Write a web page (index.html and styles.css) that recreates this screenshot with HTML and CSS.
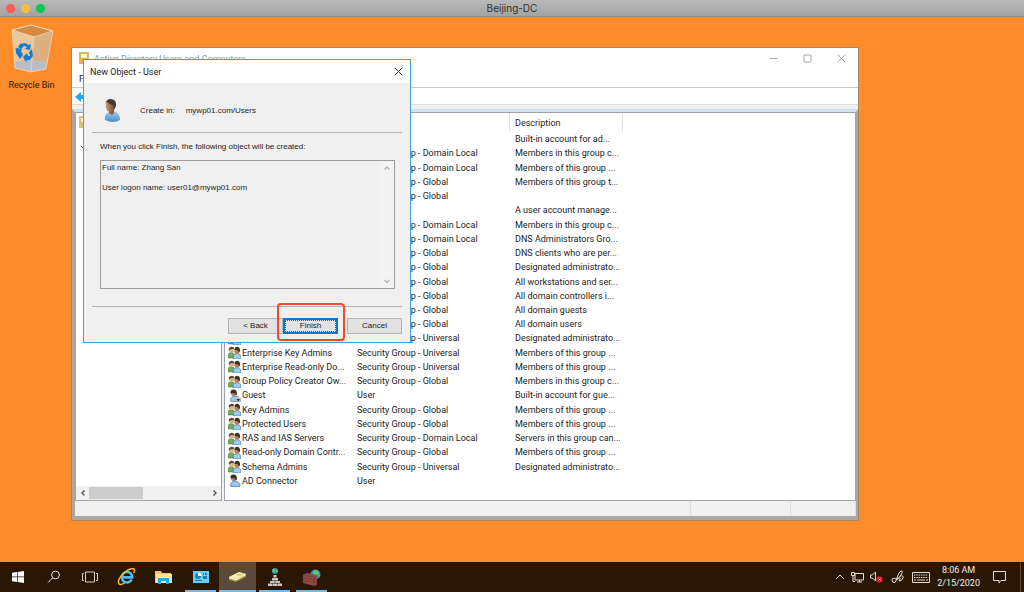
FILE: index.html
```html
<!DOCTYPE html>
<html lang="en">
<head>
<meta charset="utf-8">
<title>Beijing-DC</title>
<link rel="stylesheet" href="styles.css">
</head>
<body>
<svg class="symbols" aria-hidden="true">
  <symbol id="group" viewBox="0 0 12 12">
    <path d="M0 11V8q1-2 3-2t3 2v3z" fill="#72ad5c" stroke="#47703a" stroke-width=".5"/>
    <circle cx="3.400" cy="3.600" r="2.500" fill="#dcb87c"/><path d="M.8 4V2q2-2.500 5-.5L5 3Q3 2 1.600 4z" fill="#5c4a30"/>
    <path d="M4.800 12V9q1-2 3.500-2T12 9v3z" fill="#9bcdf4" stroke="#44719c" stroke-width=".6"/>
    <circle cx="8.300" cy="4.800" r="2.400" fill="#b98557"/><path d="M6 3.800q0-3 2.500-3T11.200 4.500L10 6Q10 3.200 6 3.800z" fill="#3a322c"/>
  </symbol>
  <symbol id="user" viewBox="0 0 12 12">
    <path d="M2.500 11.500V9q1-2.500 4-2.500T11 9v2.500z" fill="#9bcaf0" stroke="#46698c" stroke-width=".6"/>
    <circle cx="5.300" cy="3.800" r="2.700" fill="#b07c54"/><path d="M2.300 4Q2 .5 5 .5q3.500 0 3.200 4.500L7 6Q7.500 3 2.300 4z" fill="#38302a"/>
  </symbol>
</svg>
<header class="mac-bar">
  <div class="lights"><span class="light red"></span><span class="light yellow"></span><span class="light green"></span></div>
  <h1>Beijing-DC</h1>
</header>
<main class="desktop">
  <a class="shortcut" href="#bin">
    <svg viewBox="0 0 46 52" aria-hidden="true">
      <path d="M3 6 22 1l22 6-7 38-16 3-15-4z" fill="#e5bb8c"/>
      <path d="M3 6 22 1l22 6-19 6z" fill="#d58a42" stroke="#f5ddc0" stroke-width="1"/>
      <path d="M3 6l22 7-3 35-16-4z" fill="#edc69c"/>
      <path d="M25 13 44 7l-7 38-15 3z" fill="#dcb080"/>
      <path d="M5 39l12-4 21 3-1 7-15 3-16-4z" fill="#b9bec6"/>
      <path d="M3 6 6 44l16 4 15-3 7-38M25 13l-3 35" fill="none" stroke="#f3d9b8" stroke-width=".7"/>
      <g fill="#137ed0"><path d="M11 20l5-1 4 2 2-1-1 6-5-1 2-2-3-1-3 3-3-2z"/><path d="M8 24l5 1-1 2 2 4-3 4-4-6 0-3-1-1z"/><path d="M23 25l1 7-3 4h-3l-1 2-3-5 4-4 1 3h2l-1-4z"/></g>
    </svg>
    <span>Recycle Bin</span>
  </a>

  <section class="window" aria-label="Active Directory Users and Computers">
    <div class="window-title">
      <svg class="book" viewBox="0 0 10 12" aria-hidden="true"><path d="M0 0h10v12H0z" fill="#d9b95c"/><path d="M2 2h6v4H2z" fill="#fff6d8"/></svg>
      <h2>Active Directory Users and Computers</h2>
      <div class="window-controls">
        <button aria-label="Minimize"><svg viewBox="0 0 9 9"><path d="M.5 4.500h8"/></svg></button>
        <button aria-label="Maximize"><svg viewBox="0 0 9 9"><path d="M1 1h7v7H1z"/></svg></button>
        <button aria-label="Close"><svg viewBox="0 0 9 9"><path d="M.8.8l7.400 7.400M8.200.8.8 8.200"/></svg></button>
      </div>
    </div>
    <nav class="menu"><button>File</button></nav>
    <div class="toolbar"><button aria-label="Back"><svg viewBox="0 0 12 12"><path d="M0 6l6-5v3h6v4H6v3z" fill="#22a7ea"/></svg></button></div>
    <div class="body">
      <div class="tree">
        <div class="tree-items">
          <svg class="book" viewBox="0 0 10 12" aria-hidden="true"><path d="M0 0h10v12H0z" fill="#dcc274"/><path d="M2 2h6v4H2z" fill="#fff6d8"/></svg>
          <svg class="chevron" viewBox="0 0 8 6" aria-hidden="true"><path d="M2 1l3 3 3-3" fill="none" stroke="#444"/></svg>
        </div>
        <div class="hscroll">
          <button aria-label="Scroll left"><svg viewBox="0 0 8 8"><path d="M5.500 1.500 3 4l2.500 2.500"/></svg></button>
          <span class="track"><span class="thumb"></span></span>
          <button aria-label="Scroll right"><svg viewBox="0 0 8 8"><path d="M2.500 1.500 5 4 2.500 6.500"/></svg></button>
        </div>
      </div>
      <div class="list">
        <table>
          <thead><tr><th></th><th></th><th>Description</th></tr></thead>
          <tbody>
            <tr><td></td><td></td><td>Built-in account for ad...</td></tr>
            <tr><td></td><td>Security Group - Domain Local</td><td>Members in this group c...</td></tr>
            <tr><td></td><td>Security Group - Domain Local</td><td>Members of this group ...</td></tr>
            <tr><td></td><td>Security Group - Global</td><td>Members of this group t...</td></tr>
            <tr><td></td><td>Security Group - Global</td><td></td></tr>
            <tr><td></td><td></td><td>A user account manage...</td></tr>
            <tr><td></td><td>Security Group - Domain Local</td><td>Members in this group c...</td></tr>
            <tr><td></td><td>Security Group - Domain Local</td><td>DNS Administrators Gro...</td></tr>
            <tr><td></td><td>Security Group - Global</td><td>DNS clients who are per...</td></tr>
            <tr><td></td><td>Security Group - Global</td><td>Designated administrato...</td></tr>
            <tr><td></td><td>Security Group - Global</td><td>All workstations and ser...</td></tr>
            <tr><td></td><td>Security Group - Global</td><td>All domain controllers i...</td></tr>
            <tr><td></td><td>Security Group - Global</td><td>All domain guests</td></tr>
            <tr><td></td><td>Security Group - Global</td><td>All domain users</td></tr>
            <tr><td><svg><use href="#group"/></svg>Enterprise Admins</td><td>Security Group - Universal</td><td>Designated administrato...</td></tr>
            <tr><td><svg><use href="#group"/></svg>Enterprise Key Admins</td><td>Security Group - Universal</td><td>Members of this group ...</td></tr>
            <tr><td><svg><use href="#group"/></svg>Enterprise Read-only Do...</td><td>Security Group - Universal</td><td>Members of this group ...</td></tr>
            <tr><td><svg><use href="#group"/></svg>Group Policy Creator Ow...</td><td>Security Group - Global</td><td>Members in this group c...</td></tr>
            <tr><td><svg viewBox="0 0 12 12"><use href="#user"/><circle cx="9.500" cy="9.500" r="2.300" fill="#fff" stroke="#888" stroke-width=".5"/><path d="M8 9.500h3l-1.500 1.700zM9.500 8v2" fill="#222" stroke="#222" stroke-width=".5"/></svg>Guest</td><td>User</td><td>Built-in account for gue...</td></tr>
            <tr><td><svg><use href="#group"/></svg>Key Admins</td><td>Security Group - Global</td><td>Members of this group ...</td></tr>
            <tr><td><svg><use href="#group"/></svg>Protected Users</td><td>Security Group - Global</td><td>Members of this group ...</td></tr>
            <tr><td><svg><use href="#group"/></svg>RAS and IAS Servers</td><td>Security Group - Domain Local</td><td>Servers in this group can...</td></tr>
            <tr><td><svg><use href="#group"/></svg>Read-only Domain Contr...</td><td>Security Group - Global</td><td>Members of this group ...</td></tr>
            <tr><td><svg><use href="#group"/></svg>Schema Admins</td><td>Security Group - Universal</td><td>Designated administrato...</td></tr>
            <tr><td><svg><use href="#user"/></svg>AD Connector</td><td>User</td><td></td></tr>
          </tbody>
        </table>
      </div>
    </div>
    <div class="status"><span></span><span></span><span></span></div>
  </section>

  <section class="dialog" role="dialog" aria-labelledby="dialog-title">
    <div class="dialog-title">
      <h2 id="dialog-title">New Object - User</h2>
      <button aria-label="Close"><svg viewBox="0 0 9 9"><path d="M.8.8l7.400 7.400M8.200.8.8 8.200"/></svg></button>
    </div>
    <div class="dialog-body">
      <div class="location">
        <svg viewBox="0 0 18 24" aria-hidden="true">
          <defs><linearGradient id="shirt" x2="0" y2="1"><stop stop-color="#a5cff0"/><stop offset="1" stop-color="#4f8fca"/></linearGradient><linearGradient id="skin"><stop stop-color="#c99a72"/><stop offset="1" stop-color="#6e4630"/></linearGradient></defs>
          <path d="M2 21q-1-7 5-8l4-1q6 2 6 9-7 4-15 0z" fill="url(#shirt)"/>
          <path d="M6 11h5v3l-2 2-3-2z" fill="#8d5e40"/>
          <ellipse cx="7.500" cy="7" rx="4.800" ry="6" fill="url(#skin)"/>
          <path d="M2.500 5Q3 0 8 0q6 1 5 7l-2 3-1-4Q6 6 5 3 3 3 2.500 5z" fill="#3b3939"/>
        </svg>
        <span>Create in:</span><span>mywp01.com/Users</span>
      </div>
      <div class="summary">
        <label for="summary">When you click Finish, the following object will be created:</label>
        <div class="summary-box">
          <textarea id="summary" readonly>Full name: Zhang San

User logon name: user01@mywp01.com</textarea>
          <div class="vscroll">
            <button aria-label="Scroll up"><svg viewBox="0 0 8 8"><path d="M1.500 5.500 4 3l2.500 2.500"/></svg></button>
            <button aria-label="Scroll down"><svg viewBox="0 0 8 8"><path d="M1.500 3 4 5.500 6.500 3"/></svg></button>
          </div>
        </div>
      </div>
      <div class="actions">
        <button>&lt; Back</button><button class="primary">Finish</button><button class="cancel">Cancel</button>
      </div>
    </div>
    <span class="highlight"></span>
  </section>
</main>

<footer class="taskbar">
  <div class="system">
    <button aria-label="Start"><svg width="12" height="12" viewBox="0 0 12 12" fill="#fff"><path d="M0 1.700 5 1v4.600H0zM5.700.9 12 0v5.600H5.700zM0 6.300h5V11l-5-.7zM5.700 6.300H12V12l-6.300-.9z"/></svg></button>
    <button aria-label="Search"><svg width="14" height="14" viewBox="0 0 14 14" fill="none" stroke="#e8e3de"><circle cx="8.500" cy="5" r="3.900"/><path d="M5.700 7.800 1 12.600"/></svg></button>
    <button aria-label="Task view"><svg width="16" height="12" viewBox="0 0 16 12" fill="none" stroke="#d8d2cb"><path d="M3.500 1h9v10h-9zM2 2.500H.5v7H2M14 2.500h1.500v7H14"/></svg></button>
  </div>
  <div class="apps">
    <button aria-label="Internet Explorer"><svg width="19" height="18" viewBox="0 0 19 18" fill="none"><path d="M14.500 11.500Q13 14.500 10 14.500c-3 0-5-2-5-5s2-5.500 5-5.500 5 2.200 5 5.300H5.500" stroke="#4fbdec" stroke-width="2.700"/><path d="M3 16.500C-1 15 3 8 8 4s9-4 9.500-2c.3 1-.3 2-1 3M3 16.500c1.500.3 3-.5 4.500-1.500" stroke="#f2b92d" stroke-width="1.500"/></svg></button>
    <button aria-label="File Explorer"><svg width="17" height="15" viewBox="0 0 17 15"><path d="M0 1h6l1 2h9v10H0z" fill="#f0c55b"/><path d="M1 4h16v9H1z" fill="#ffe49a"/><path d="M3 14V8h11v6h-3v-3H6v3z" fill="#28a8df"/></svg></button>
    <button class="running" aria-label="Server Manager"><svg width="16" height="12" viewBox="0 0 16 12"><path d="M0 0h16v12H0z" fill="#6dcbf5"/><circle cx="5" cy="5" r="3" fill="#1e7dba"/><path d="M5 5V1.500A3.500 3.500 0 0 1 8.500 5z" fill="#e6f8ff"/><path d="M10 2h1v2h-1zM12 2h2v2h-2zM10 5h4v3h-4zM2 9h7v1H2z" fill="#2878b0"/></svg></button>
    <button class="running active" aria-label="Active Directory"><svg width="19" height="12" viewBox="0 0 19 12"><path d="M1 6 11 1l7 2v3L8 11 1 9z" fill="#a78f42"/><path d="M1 6 11 1l7 2-10 5z" fill="#f8edb2"/><path d="M8 8l10-5v1L8 9.500 1 7.300V6z" fill="#fff9d7"/><path d="M8 4l3-1.500 4 1-3 1.500z" fill="#e2c763"/></svg></button>
    <button class="running" aria-label="DNS"><svg width="14" height="18" viewBox="0 0 14 18"><circle cx="7" cy="3" r="3" fill="#2389d0"/><path d="M5 1q3-1 3 1L6 5 4 3zM8 3l2-1v2l-2 1z" fill="#5ec65a"/><path d="M5.500 7h3v2.500h-3zM4 10h6v2.500H4zM2 13h4.700v2H2zM7.300 13H12v2H7.300zM0 15.500h4.400V18H0zM4.800 15.500h4.400V18H4.800zM9.600 15.500H14V18H9.600z" fill="#c3c9c9"/></svg></button>
    <button class="running" aria-label="Firewall"><svg width="18" height="17" viewBox="0 0 18 17"><circle cx="12.500" cy="5.500" r="5" fill="#268bc8"/><path d="M10 2l4-1 2 3-3 3-3-2zM15 6l2-1-1 4z" fill="#6bc565"/><path d="M0 6l4-2 10 2v10l-3 1L0 14z" fill="#8d4b43"/><path d="M0 6l11 2v9M0 9l11 2 3-1M0 11.500l11 2 3-1" fill="none" stroke="#6b352e" stroke-width=".5"/></svg></button>
  </div>
  <div class="tray">
    <svg width="10" height="6" viewBox="0 0 10 6"><path d="M1 5l4-4 4 4"/></svg>
    <svg width="13" height="12" viewBox="0 0 13 12"><path d="M4 2.500h8.500V9H4zM6 11h5M8.500 9v2M.5 1.500h3v3h-3zM2 4.500v6h2"/></svg>
    <svg width="13" height="12" viewBox="0 0 13 12"><path d="M.5 4h2L5.500 1v9L2.500 7h-2z"/><circle cx="9.500" cy="8.500" r="3.200" fill="#e81123" stroke="none"/><path d="M8.500 7.500l2 2m0-2-2 2" stroke="#fff" stroke-width=".8"/></svg>
    <svg class="pen" width="14" height="14" viewBox="0 0 14 14"><path d="M5 10 8 3q2-3 3-2t-1 4l-4 5M5 9Q1 7 1 10t3 2.500L6 9q4-3 3 0l-1 2q3 0 4-3t-3-2"/></svg>
    <svg class="keyboard" width="18" height="11" viewBox="0 0 18 11"><path d="M.5.5h17v10H.5z"/><path d="M2 3h14M2 5.500h14" stroke-dasharray="1.500 .8"/><path d="M2 8h2M5 8h8M14 8h2"/></svg>
    <time datetime="2020-02-15T08:06"><span>8:06 AM</span><span>2/15/2020</span></time>
    <svg width="13" height="13" viewBox="0 0 13 13"><path d="M.5.500h12v9H8l-2 2.500v-2.500H.5z"/></svg>
  </div>
</footer>
</body>
</html>
```
FILE: styles.css
```css
* { box-sizing: border-box; }
body {
  margin: 0;
  min-height: 100vh;
  display: flex;
  flex-direction: column;
  background: #ff8c2b;
  color: #1c1c1c;
  font: 9px/14px Roboto, "Noto Sans", sans-serif;
}
button {
  padding: 0;
  border: 0;
  background: none;
  color: inherit;
  font: inherit;
  display: flex;
  align-items: center;
  justify-content: center;
}
h1, h2 { margin: 0; font: inherit; }
svg { display: block; flex: none; }
.symbols { position: absolute; width: 0; height: 0; }

.mac-bar {
  height: 17px;
  display: grid;
  grid-template-columns: 1fr auto 1fr;
  align-items: center;
  background: linear-gradient(#b9b9b9, #a2a2a2);
  border-bottom: 1px solid #96897c;
  font: 10px/16px Inter, "Liberation Sans", sans-serif;
  color: #303030;
}
.lights { display: flex; gap: 6px; padding-left: 6px; }
.light { width: 9px; height: 9px; border-radius: 50%; }
.red { background: #fc5b57; }
.yellow { background: #fdbc40; }
.green { background: #06c94c; }

.desktop { flex: 1; position: relative; }
.shortcut {
  display: flex;
  flex-direction: column;
  align-items: center;
  gap: 2px;
  width: 63px;
  padding-top: 7px;
  color: #27180c;
  text-decoration: none;
}
.shortcut svg { width: 46px; height: 52px; }

.window {
  position: absolute;
  left: 71px;
  top: 30px;
  width: 788px;
  height: 474px;
  display: flex;
  flex-direction: column;
  background: #f0f0f0;
  border: 1px solid #b08356;
}
.window-title { display: flex; height: 21px; padding: 4px 0 0 7px; background: #fff; color: #999; }
.book { width: 10px; height: 12px; }
.window-title .book { margin-right: 5px; }
.window-title h2 { flex: 1; }
.window-controls { display: flex; }
.window-controls button { width: 34px; height: 12px; }
.window-controls svg { width: 9px; height: 9px; fill: none; stroke: #aaa; }
.menu { height: 19px; padding: 3px 7px; background: #fff; border-bottom: 1px solid #c8c8ce; }
.toolbar { height: 17px; padding: 3px; background: #fff; border-bottom: 1px solid #ddd; }
.toolbar svg { width: 12px; height: 12px; }
.body {
  flex: 1;
  display: flex;
  gap: 2px;
  margin-top: 4px;
  border: solid #a8a8a8;
  border-width: 0 2px 0 3px;
  border-top: 3px solid #d3e1ec;
  min-height: 0;
}
.tree, .list { background: #fff; border: 1px solid #9da3ad; }
.tree { width: 147px; display: flex; flex-direction: column; }
.tree-items { flex: 1; padding: 3px; }
.chevron { width: 8px; height: 6px; margin-top: 17px; }
.hscroll { display: flex; height: 14px; background: #f0f0f0; }
.hscroll button { width: 13px; }
.hscroll svg, .vscroll svg { width: 8px; height: 8px; fill: none; stroke: #505050; stroke-width: 1.3; }
.track { flex: 1; display: flex; padding: 1px 0; }
.thumb { width: 54px; background: #cdcdcd; }
.list { flex: 1; }
table, thead { display: block; }
tr { display: grid; grid-template-columns: 127px 158px 113px; align-items: center; }
th, td { padding: 0 0 0 5px; font-weight: 400; text-align: left; white-space: nowrap; }
th { height: 19px; padding-top: 3px; border-right: 1px solid #e2e2e2; }
tbody { display: grid; grid-auto-rows: 1fr; height: 356px; }
td:first-child { display: flex; align-items: center; gap: 1px; padding-left: 3px; }
td svg { width: 13px; height: 13px; }
.status {
  display: grid;
  grid-template-columns: 1fr 100px 65px;
  height: 19px;
  border: solid #a8a8a8;
  border-width: 0 2px 4px 3px;
}
.status span { border-right: 1px solid #dedede; }

.dialog {
  position: absolute;
  left: 83px;
  top: 42px;
  width: 328px;
  height: 284px;
  display: flex;
  flex-direction: column;
  border: 1px solid #3f9fdf;
  background: #f0f0f0;
}
.dialog-title {
  display: flex;
  justify-content: space-between;
  align-items: center;
  height: 23px;
  padding: 0 7px 0 6px;
  background: #fff;
}
.dialog-title svg { width: 9px; height: 9px; fill: none; stroke: #333; }
.dialog-body {
  flex: 1;
  display: flex;
  flex-direction: column;
  padding: 0 8px 8px;
  font-family: "Liberation Sans", sans-serif;
  font-size: 8px;
}
.location {
  display: flex;
  align-items: center;
  gap: 11px;
  height: 50px;
  padding: 6px 0 0 11px;
  border-bottom: 1px solid #b4b4b4;
}
.location svg { width: 18px; height: 24px; margin-right: 8px; }
.summary { flex: 1; display: flex; flex-direction: column; gap: 6px; padding: 7px 7px 17px 8px; }
.summary-box { flex: 1; display: flex; border: 1px solid #9b9b9b; }
textarea {
  flex: 1;
  padding: 2px 1px;
  border: 0;
  outline: 0;
  resize: none;
  overflow: hidden;
  background: none;
  color: inherit;
  font: inherit;
  line-height: 10px;
}
.vscroll { width: 14px; display: flex; flex-direction: column; justify-content: space-between; background: #f3f3f3; }
.vscroll button { height: 14px; }
.vscroll svg { stroke: #b5b5b5; }
.actions { display: flex; justify-content: flex-end; padding-top: 11px; border-top: 1px solid #b4b4b4; }
.actions button { width: 55px; height: 16px; border: 1px solid #b2b2b2; background: #e2e2e2; }
.actions .primary { border: 2px solid #0878d0; outline: 1px dotted #555; outline-offset: -3px; }
.actions .cancel { margin-left: 9px; }
.highlight {
  position: absolute;
  right: 65px;
  bottom: 1px;
  width: 68px;
  height: 38px;
  border: 2px solid #f9472b;
  border-radius: 4px;
  pointer-events: none;
}

.taskbar { display: flex; height: 30px; background: #291704; color: #eee; }
.system, .apps { display: flex; }
.system button { width: 36px; }
.apps button { width: 37px; border: solid transparent; border-width: 0 3px; }
.apps .running { background: linear-gradient(#76b9ed, #76b9ed) bottom / 100% 2px no-repeat padding-box; }
.apps .active { border-width: 0; background-color: #594a3a; }
.tray {
  flex: 1;
  display: flex;
  justify-content: flex-end;
  align-items: center;
  gap: 6px;
  margin-right: 3px;
  padding-right: 14px;
  border-right: 1px solid #5a4b3c;
}
.tray svg { fill: none; stroke: #e3ded8; }
.tray .pen { margin-left: 2px; }
.tray .keyboard { margin: 0 1px; }
time { display: flex; flex-direction: column; align-items: center; margin-right: 7px; line-height: 13px; }
```
